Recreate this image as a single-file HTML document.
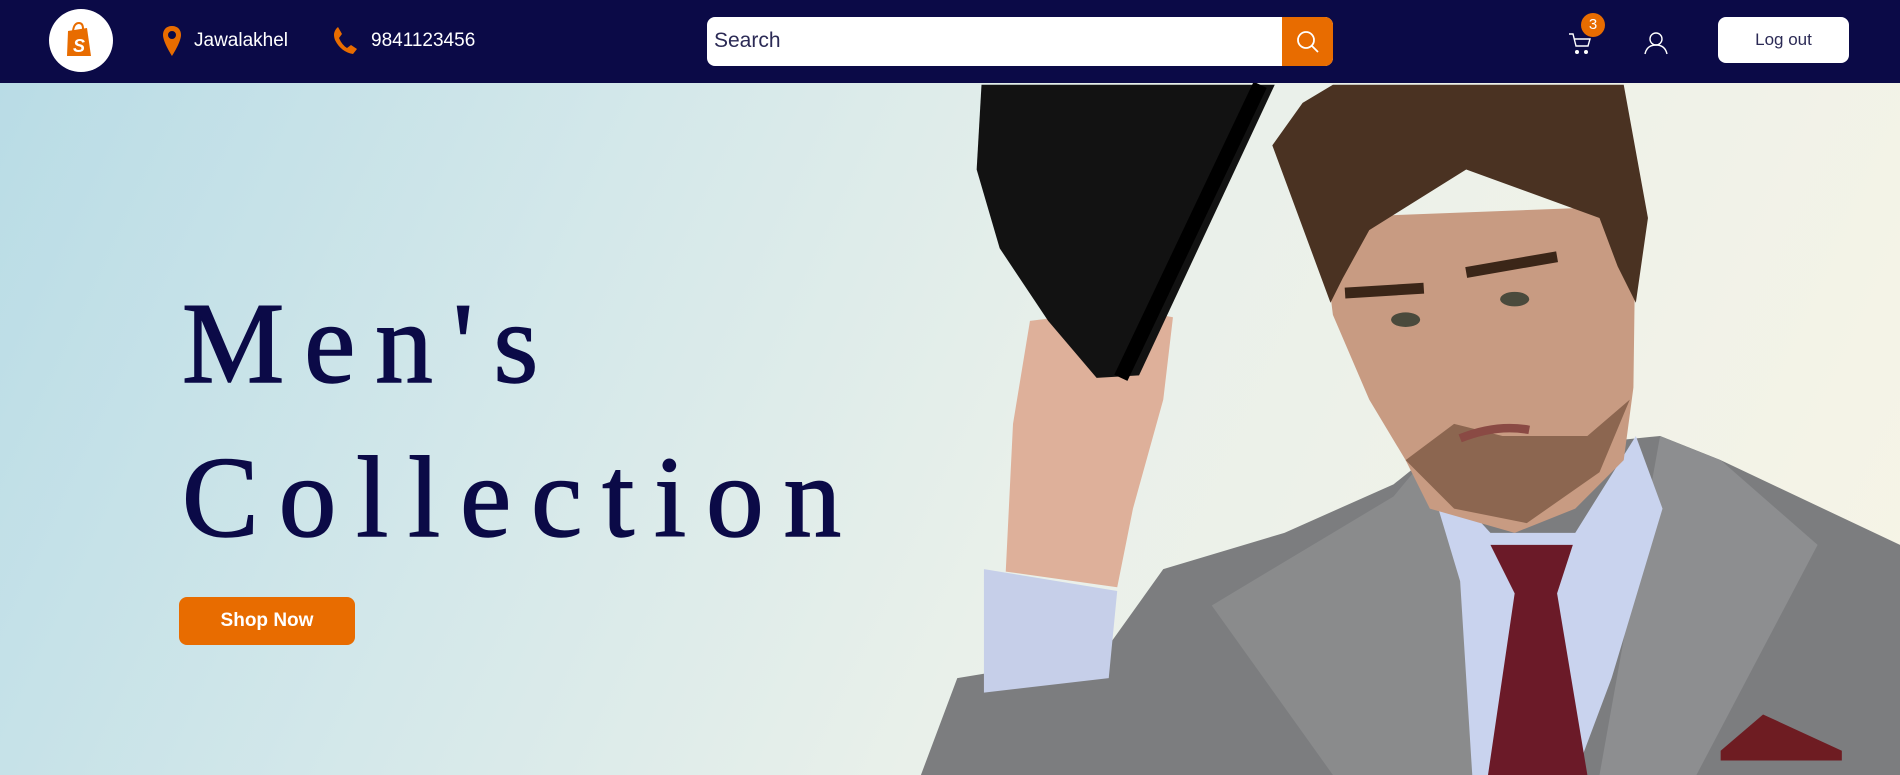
<!DOCTYPE html>
<html><head><meta charset="utf-8"><style>
*{margin:0;padding:0;box-sizing:border-box}
body{width:1900px;height:775px;overflow:hidden;font-family:"Liberation Sans",sans-serif;position:relative;background:#fff}
.hdr{position:absolute;left:0;top:0;width:1900px;height:83px;background:#0b0a47}
.abs{position:absolute}
.hero{position:absolute;left:0;top:83px;width:1900px;height:692px;background:linear-gradient(115deg,#b9dce6 0%,#d4e8ea 30%,#e9f0ea 55%,#f7f4e6 100%);overflow:hidden}
.t{position:absolute;left:182px;font-family:"Liberation Serif",serif;font-size:115px;color:#0b0a47;letter-spacing:20px;line-height:1;-webkit-text-stroke:1.5px #0b0a47}
</style></head><body>
<div class="hero">
<svg class="abs" style="left:0;top:-83px" width="1900" height="775" viewBox="0 0 1568 640" preserveAspectRatio="none">
<polygon points="760,640 790,560 820,555 910,540 960,470 1060,440 1150,400 1175,380 1370,360 1420,380 1568,450 1568,640" fill="#7c7d7f"/>
<polygon points="1000,500 1150,410 1175,380 1215,500 1215,640 1100,640" fill="#8a8b8c"/>
<polygon points="1370,360 1420,380 1500,450 1400,640 1320,640" fill="#8d8e90"/>
<polygon points="1175,380 1230,440 1300,440 1350,360 1372,420 1330,560 1300,640 1215,640 1205,480" fill="#c9d3ee"/>
<polygon points="1230,450 1298,450 1285,490 1310,640 1228,640 1250,490" fill="#6b1a28"/>
<polygon points="1420,620 1455,590 1520,620 1520,628 1420,628" fill="#6e1c22"/>
<polygon points="1090,180 1350,170 1348,320 1340,380 1300,420 1250,440 1180,420 1160,380 1130,330 1100,260" fill="#c89b82"/>
<polygon points="1160,380 1200,420 1260,432 1320,390 1345,330 1310,360 1240,360 1200,350" fill="#8c6650"/>
<path d="M1110,242 L1175,238 M1210,225 L1285,212" stroke="#3b2618" stroke-width="9" fill="none"/>
<ellipse cx="1160" cy="264" rx="12" ry="6" fill="#4a4a3c"/>
<ellipse cx="1250" cy="247" rx="12" ry="6" fill="#4a4a3c"/>
<path d="M1205,362 Q1235,350 1262,355" stroke="#8a4a44" stroke-width="7" fill="none"/>
<polygon points="1050,120 1075,85 1100,70 1340,70 1360,180 1350,250 1335,220 1320,180 1210,140 1130,190 1108,230 1098,250" fill="#4a3222"/>
<polygon points="850,265 930,255 968,262 960,330 935,420 922,485 830,472 836,350" fill="#deb09a"/>
<polygon points="812,470 922,488 915,560 812,572" fill="#c6cfe9"/>
<polygon points="810,70 1052,70 940,310 905,312 865,265 825,205 806,140" fill="#121212"/>
<path d="M1040,70 L925,312" stroke="#000" stroke-width="12"/>
</svg>
<div class="t" style="top:203px">Men's</div>
<div class="t" style="top:357px">Collection</div>
<div class="abs" style="left:179px;top:514px;width:176px;height:48px;background:#e86c00;border-radius:8px;color:#fff;font-weight:bold;font-size:19px;text-align:center;line-height:48px">Shop Now</div>
</div>
<div class="hdr">
<div class="abs" style="left:49px;top:9px;width:64px;height:63px;border-radius:50%;background:#fff"></div>
<svg class="abs" style="left:64px;top:20px" width="30" height="40" viewBox="0 0 30 40"><path d="M4,11 L23,8 L27,36 L3,36 Z" fill="#e86c00"/><path d="M9,11 Q10,3 15,3 Q19,3 19,9" stroke="#e86c00" stroke-width="2" fill="none"/><text x="9" y="32" font-family="Liberation Sans" font-weight="bold" font-size="18" fill="#fff" font-style="italic">S</text></svg>
<svg class="abs" style="left:162px;top:25px" width="20" height="32" viewBox="0 0 20 32"><path d="M10,1 C4,1 1,5 1,10 C1,17 10,31 10,31 C10,31 19,17 19,10 C19,5 16,1 10,1 Z M10,6 A4,4 0 1 1 10,14 A4,4 0 1 1 10,6 Z" fill="#e86c00" fill-rule="evenodd"/></svg>
<div class="abs" style="left:194px;top:30px;color:#fff;font-size:19px">Jawalakhel</div>
<svg class="abs" style="left:331px;top:26px" width="28" height="28" viewBox="0 0 26 28"><path d="M6,1 L10,8 L7,12 Q10,19 15,22 L19,19 L25,23 L21,28 Q9,26 3,14 Q0,6 6,1 Z" fill="#e86c00"/></svg>
<div class="abs" style="left:371px;top:30px;color:#fff;font-size:19px">9841123456</div>
<div class="abs" style="left:707px;top:17px;width:626px;height:49px;background:#fff;border-radius:8px;overflow:hidden">
<div class="abs" style="left:575px;top:0;width:51px;height:49px;background:#e86c00"></div>
<div class="abs" style="left:7px;top:12px;font-size:21px;color:#2b2a55">Search</div>
<svg class="abs" style="left:588px;top:12px" width="26" height="26" viewBox="0 0 26 26"><circle cx="11" cy="11" r="8" stroke="#fff" stroke-width="1.8" fill="none"/><path d="M17,17 L23,23" stroke="#fff" stroke-width="1.8"/></svg>
</div>
<svg class="abs" style="left:1568px;top:31px" width="24" height="25" viewBox="0 0 24 25"><path d="M1,3 L5,3 L8,15 L20,15 L22,8 L6,8" stroke="#fff" stroke-width="1.4" fill="none"/><circle cx="9" cy="21" r="2" fill="#fff"/><circle cx="18" cy="21" r="2" fill="#fff"/></svg>
<div class="abs" style="left:1581px;top:13px;width:24px;height:24px;border-radius:50%;background:#e86c00;color:#fff;font-size:15px;text-align:center;line-height:24px">3</div>
<svg class="abs" style="left:1644px;top:31px" width="24" height="24" viewBox="0 0 24 24"><circle cx="12" cy="8" r="6" stroke="#fff" stroke-width="1.4" fill="none"/><path d="M1,23 Q3,14 12,14 Q21,14 23,23" stroke="#fff" stroke-width="1.4" fill="none"/></svg>
<div class="abs" style="left:1718px;top:17px;width:131px;height:46px;background:#fff;border-radius:8px;color:#2b2a55;font-size:17px;text-align:center;line-height:46px">Log out</div>
</div>
</body></html>
